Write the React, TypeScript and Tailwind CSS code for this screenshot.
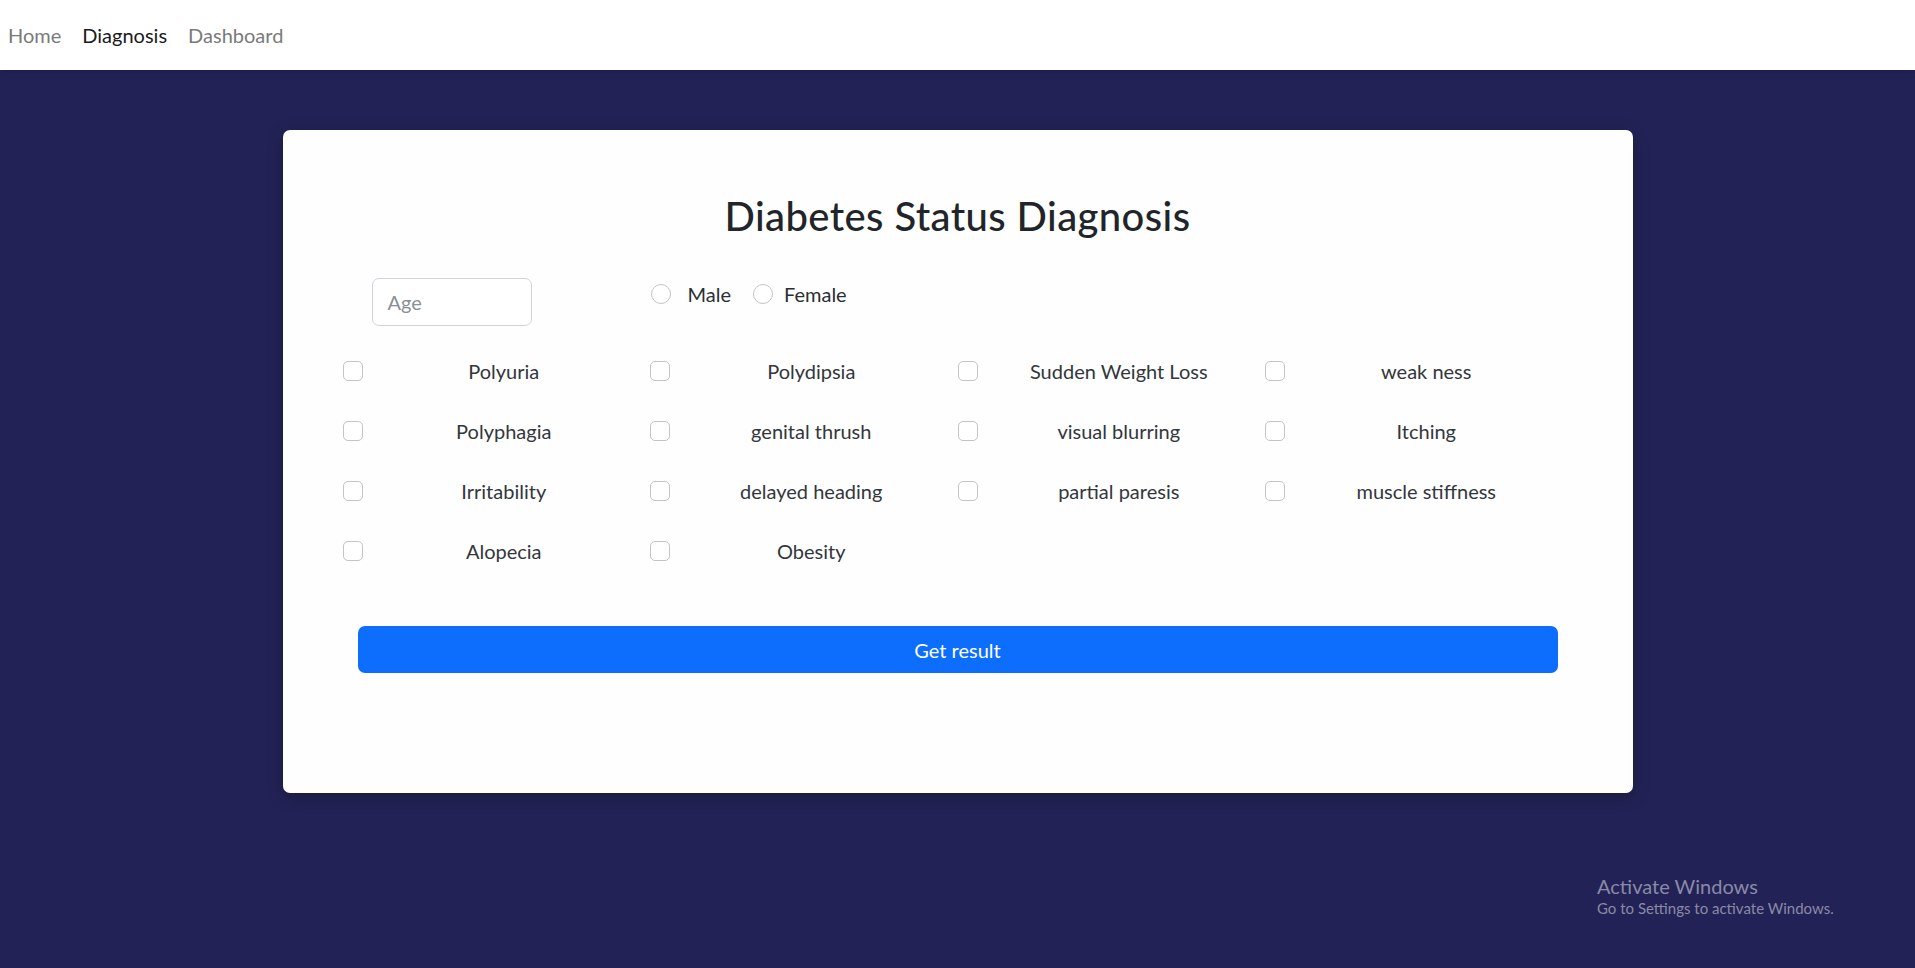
import React from "react";

const rows: string[][] = [
  ["Polyuria", "Polydipsia", "Sudden Weight Loss", "weak ness"],
  ["Polyphagia", "genital thrush", "visual blurring", "Itching"],
  ["Irritability", "delayed heading", "partial paresis", "muscle stiffness"],
  ["Alopecia", "Obesity"],
];

function Box() {
  return (
    <span className="block w-[20px] h-[20px] shrink-0 rounded-[5px] border border-[#c4c4c4] bg-white" />
  );
}

function Radio() {
  return (
    <span className="block w-[20px] h-[20px] shrink-0 rounded-full border border-[#c4c4c4] bg-white" />
  );
}

export default function App() {
  return (
    <div
      className="relative min-h-screen bg-[#222256] text-[#212529]"
      style={{ fontFamily: "Lato, 'Open Sans', 'Noto Sans', sans-serif" }}
    >
      <nav className="h-[70px] bg-white flex items-center pl-[8px] gap-[21px] text-[20px] shadow-[0_2px_8px_rgba(0,0,0,0.15)]">
        <span className="text-[#7a7a7a]">Home</span>
        <span className="text-[#1a1a1a]">Diagnosis</span>
        <span className="text-[#7a7a7a]">Dashboard</span>
      </nav>

      <div className="flex justify-center pt-[60px]">
        <div className="w-[1350px] h-[663px] bg-[#fefefe] rounded-[7px] shadow-[0_4px_16px_rgba(0,0,0,0.25)] px-[60px] pt-[62px]">
          <h2 className="text-[40px] leading-[48px] font-medium tracking-[0.4px] text-center text-[#212529]">
            Diabetes Status Diagnosis
          </h2>

          <div className="flex items-start mt-[38px]">
            <div className="w-[308px] shrink-0">
              <div className="ml-[29px] w-[160px] h-[48px] rounded-[7px] border border-[#ced4da] bg-white flex items-center px-[15px] text-[20px] text-[#8a9096]">
                Age
              </div>
            </div>
            <div className="h-[32px] flex items-center text-[20px] text-[#2b2f33]">
              <Radio />
              <span className="ml-[17px]">Male</span>
              <span className="ml-[22px]"><Radio /></span>
              <span className="ml-[11px]">Female</span>
            </div>
          </div>

          <div className="mt-[15px] flex flex-col">
            {rows.map((r, i) => (
              <div key={i} className="grid grid-cols-4 h-[60px]">
                {r.map((label) => (
                  <div key={label} className="flex items-center">
                    <Box />
                    <span className="flex-1 text-center pr-[5px] text-[20px] text-[#33373b]">
                      {label}
                    </span>
                  </div>
                ))}
              </div>
            ))}
          </div>

          <div className="mt-[45px] mx-[15px] h-[47px] rounded-[7px] bg-[#0d6efd] flex items-center justify-center text-white text-[20px]">
            Get result
          </div>
        </div>
      </div>

      <div className="absolute left-[1597px] top-[874px] text-[#8a8aa6] leading-tight">
        <div className="text-[20px]">Activate Windows</div>
        <div className="text-[15px]">Go to Settings to activate Windows.</div>
      </div>
    </div>
  );
}
